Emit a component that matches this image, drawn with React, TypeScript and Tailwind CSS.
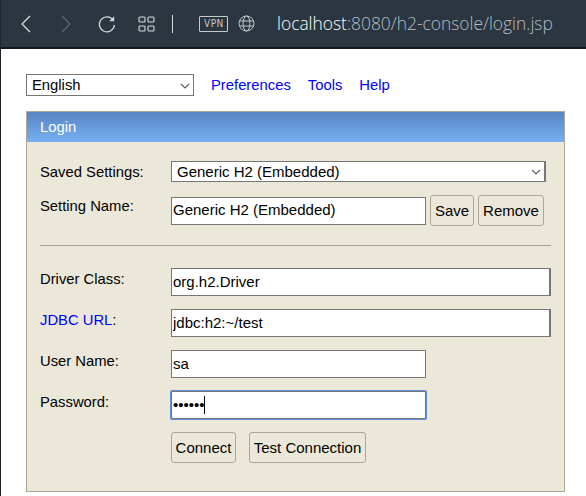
const font = "[font-family:'Liberation_Sans',Arial,sans-serif]";

function Label({ children, className = "pt-[3px]" }: { children: React.ReactNode; className?: string }) {
  return (
    <div className={`w-[131px] shrink-0 ${className}`}>
      <label className="block text-[14.8px] leading-[17px] text-black">{children}</label>
    </div>
  );
}

function Btn({ children, className = "" }: { children: React.ReactNode; className?: string }) {
  return (
    <button className={`h-[31px] rounded-[3px] border border-[#aca899] bg-[#ece8d9] text-[15px] leading-[17px] text-black ${className}`}>
      {children}
    </button>
  );
}

function Chevron({ className = "" }: { className?: string }) {
  return (
    <svg width="10" height="6" viewBox="0 0 10 6" fill="none" stroke="#5f5f5f" strokeWidth="1.2" className={`pointer-events-none absolute ${className}`}>
      <path d="m1 1 4 4 4-4" />
    </svg>
  );
}

const inputCls =
  "h-[28px] border border-[#767676] bg-white px-[1px] pb-[2px] text-[15px] text-black outline-none [font-family:'Liberation_Sans',Arial,sans-serif]";

export default function App() {
  return (
    <div className={`flex h-[496px] w-[586px] flex-col overflow-hidden border-l border-[#1d242b] bg-white ${font}`}>
      <header className="flex h-[49px] shrink-0 items-center border-b-2 border-[#14191e] bg-[#2b3640] text-[#d9dde0]">
        <svg width="12" height="18" viewBox="0 0 12 18" fill="none" stroke="#d5d9dc" strokeWidth="1.3" className="ml-[19px]">
          <path d="M10 1 2 9l8 8" />
        </svg>
        <svg width="12" height="18" viewBox="0 0 12 18" fill="none" stroke="#5a646d" strokeWidth="1.3" className="ml-[28px]">
          <path d="m2 1 8 8-8 8" />
        </svg>
        <svg width="18" height="18" viewBox="0 0 18 18" fill="none" stroke="#d5d9dc" strokeWidth="1.3" className="ml-[26px]">
          <path d="M15.2 5.2A7.5 7.5 0 1 0 16.4 10" />
          <path d="M16.2 1.2v5h-5" fill="#d5d9dc" stroke="none" />
        </svg>
        <svg width="17" height="16" viewBox="0 0 17 16" fill="none" stroke="#d5d9dc" strokeWidth="1.1" className="ml-[22px]">
          <rect x="1" y="1" width="6" height="5" rx="1" />
          <rect x="10" y="1" width="6" height="5" rx="1" />
          <rect x="1" y="10" width="6" height="5" rx="1" />
          <rect x="10" y="10" width="6" height="5" rx="1" />
        </svg>
        <div className="ml-[17px] h-[18px] w-px bg-[#d5d9dc]" />
        <div className="ml-[26px] flex h-[16px] w-[29px] items-center justify-center rounded-[1px] border border-[#c5cacd] text-[10px] leading-none tracking-[0.5px] [font-family:'DejaVu_Sans',sans-serif] text-[#c5cacd]">
          <span className="scale-x-90">VPN</span>
        </div>
        <svg width="17" height="17" viewBox="0 0 17 17" fill="none" stroke="#c5cacd" strokeWidth="1" className="ml-[10px]">
          <circle cx="8.5" cy="8.5" r="7.5" />
          <ellipse cx="8.5" cy="8.5" rx="3.4" ry="7.5" />
          <path d="M1.5 6h14M1.5 11h14" />
        </svg>
        <span className="ml-[22px] whitespace-nowrap text-[17.4px] leading-none [font-family:'Open_Sans',sans-serif] font-light text-white">
          localhost<span className="text-[#b4bcc2]">:8080/h2-console/login.jsp</span>
        </span>
      </header>

      <main className="flex flex-col pl-[25px] pt-[25px]">
        <nav className="flex h-[22px] items-center text-[14.8px] text-[#0000ff]">
          <div className="relative h-[22px] w-[168px]">
            <select className="block h-[22px] w-full appearance-none border border-[#767676] bg-white pl-[5px] text-[14.8px] leading-[16px] text-black" defaultValue="English">
              <option>English</option>
            </select>
            <Chevron className="right-[4px] top-[9px]" />
          </div>
          <a className="ml-[17px]">Preferences</a>
          <a className="ml-[17px]">Tools</a>
          <a className="ml-[17px]">Help</a>
        </nav>

        <section className="mt-[15px] flex h-[381px] w-[539px] flex-col border border-[#aca899] bg-[#ece8d9]">
          <div className="flex h-[30px] shrink-0 items-center bg-gradient-to-b from-[#5a85c3] to-[#75b0f4] pl-[13px] text-[14.8px] text-white">
            Login
          </div>
          <div className="flex flex-col px-[13px]">
            <div className="mt-[19px] flex h-[21px] items-center">
              <Label className="pt-[1px]">Saved Settings:</Label>
              <div className="relative h-[21px] w-[375px]">
                <select className="block h-[21px] w-full appearance-none border border-r-2 border-[#767676] bg-white pl-[5px] text-[15px] leading-[16px] text-black" defaultValue="g">
                  <option value="g">Generic H2 (Embedded)</option>
                </select>
                <Chevron className="right-[5px] top-[8px]" />
              </div>
            </div>
            <div className="mt-[13px] flex h-[31px] items-center">
              <div className="self-start"><Label>Setting Name:</Label></div>
              <input className={`${inputCls} w-[255px]`} defaultValue="Generic H2 (Embedded)" />
              <Btn className="ml-[4px] w-[44px]">Save</Btn>
              <Btn className="ml-[4px] w-[66px]">Remove</Btn>
            </div>
            <hr className="mt-[19px] w-[511px] border-t border-[#a3a091]" />
            <div className="mt-[22px] flex h-[28px] items-start">
              <Label>Driver Class:</Label>
              <input className={`${inputCls} w-[380px] border-r-2`} defaultValue="org.h2.Driver" />
            </div>
            <div className="mt-[13px] flex h-[28px] items-start">
              <Label><a className="text-[#0000ff]">JDBC URL</a>:</Label>
              <input className={`${inputCls} w-[380px] border-r-2`} defaultValue="jdbc:h2:~/test" />
            </div>
            <div className="mt-[13px] flex h-[28px] items-start">
              <Label>User Name:</Label>
              <input className={`${inputCls} w-[255px]`} defaultValue="sa" />
            </div>
            <div className="mt-[13px] flex h-[28px] items-start">
              <Label>Password:</Label>
              <div className="relative">
                <input type="password" readOnly className={`${inputCls} w-[255px] rounded-[1px] border-[#5b8fe0] ring-1 ring-[#5b8fe0]`} defaultValue="sa1234" />
                <span className="absolute left-[33px] top-[5px] h-[18px] w-px bg-black" />
              </div>
            </div>
            <div className="mt-[13px] ml-[131px] flex">
              <Btn className="w-[65px]">Connect</Btn>
              <Btn className="ml-[13px] w-[117px]">Test Connection</Btn>
            </div>
          </div>
        </section>
      </main>
    </div>
  );
}
